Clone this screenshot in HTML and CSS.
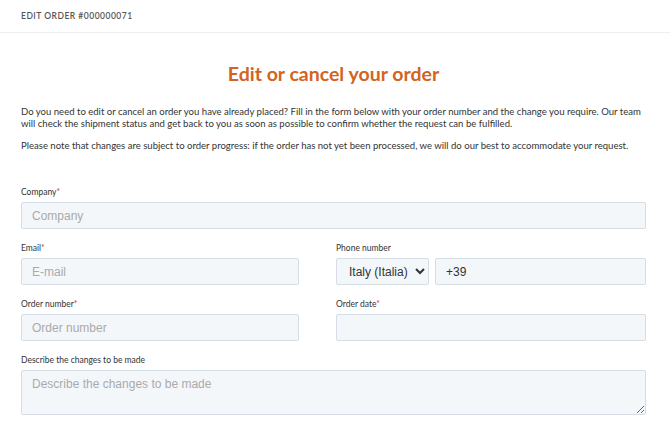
FILE: index.html
```html
<!DOCTYPE html>
<html lang="en">
  <head>
    <meta charset="UTF-8" />
    <meta name="viewport" content="width=device-width, initial-scale=1.0" />
    <title>Edit order</title>
    <link rel="stylesheet" href="styles.css">
  </head>
  <body>
    <header class="topbar">Edit order #000000071</header>

    <main class="page">
      <h1>Edit or cancel your order</h1>

      <p>
        Do you need to edit or cancel an order you have already placed? Fill in the form below with your order number and the change you require. Our team will check the shipment status and get back to you as soon as possible to confirm whether the request can be fulfilled.
      </p>
      <p>
        Please note that changes are subject to order progress: if the order has not yet been processed, we will do our best to accommodate your request.
      </p>

      <form class="order-form">
        <div class="field full">
          <label for="company">Company<span class="req">*</span></label>
          <input type="text" id="company" placeholder="Company" />
        </div>

        <div class="field">
          <label for="email">Email<span class="req">*</span></label>
          <input type="text" id="email" placeholder="E-mail" />
        </div>
        <div class="field">
          <label for="phone">Phone number</label>
          <div class="phone">
            <select class="country">
              <option>Italy (Italia)</option>
            </select>
            <input type="text" id="phone" value="+39" />
          </div>
        </div>

        <div class="field">
          <label for="order">Order number<span class="req">*</span></label>
          <input type="text" id="order" placeholder="Order number" />
        </div>
        <div class="field">
          <label for="date">Order date<span class="req">*</span></label>
          <input type="text" id="date" />
        </div>

        <div class="field full">
          <label for="changes">Describe the changes to be made</label>
          <textarea id="changes" placeholder="Describe the changes to be made"></textarea>
        </div>
      </form>
    </main>
  </body>
</html>
```

FILE: styles.css
```css
body {
  margin: 0;
  background: #fff;
  color: #333;
  font-family: Lato, "Open Sans", sans-serif;
}

.topbar {
  height: 32px;
  line-height: 32px;
  padding: 0 21px;
  border-bottom: 1px solid #eee;
  font-size: 8.5px;
  font-weight: 600;
  letter-spacing: 0.5px;
  text-transform: uppercase;
  color: #555;
}

.page {
  padding: 0 24px 0 21px;
}

h1 {
  margin: 29px 0 21px;
  text-align: center;
  font-size: 19.5px;
  font-weight: 700;
  color: #d2641e;
}

p {
  margin: 0 0 10px;
  font-size: 9.55px;
  line-height: 12px;
}

.order-form {
  display: grid;
  grid-template-columns: 278px 1fr;
  column-gap: 37px;
  row-gap: 14px;
  margin-top: 35px;
}

.field.full {
  grid-column: 1 / -1;
}

label {
  display: block;
  font-size: 8.5px;
  line-height: 10px;
  margin-bottom: 5px;
}

.req {
  color: #e03030;
}

input,
select,
textarea {
  box-sizing: border-box;
  width: 100%;
  height: 27px;
  padding: 0 10px;
  background: #f4f7fa;
  border: 1px solid #d5dde6;
  border-radius: 2px;
  font: 12px "Liberation Sans", Arial, sans-serif;
  color: #333;
}

::placeholder {
  color: #aaa;
}

textarea {
  height: 45px;
  padding: 6px 10px;
  display: block;
}

.phone {
  display: flex;
  gap: 6px;
}

.phone .country {
  width: 93px;
  flex: none;
  padding: 0 4px 0 8px;
}
```
